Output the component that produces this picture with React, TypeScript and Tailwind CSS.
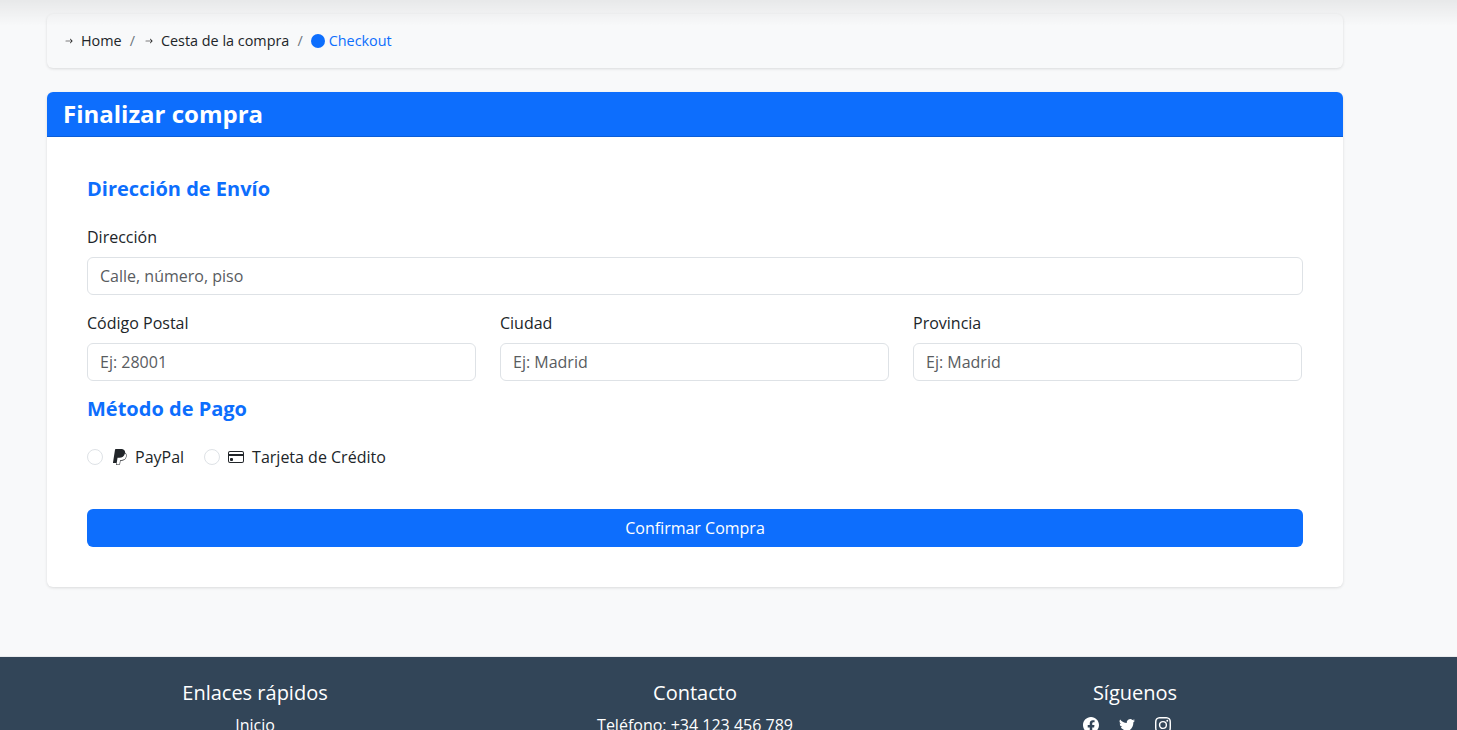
import React from 'react';
import { BsArrowRight, BsCreditCard, BsFacebook, BsInstagram, BsPaypal, BsTwitter } from 'react-icons/bs';

const App: React.FC = () => {
  return (
    <div className="relative h-[730px] overflow-hidden bg-[#f8f9fa] text-[#212529] font-['Open_Sans',sans-serif] flex flex-col">
      {/* header shadow falling over the page */}
      <div className="absolute top-0 left-0 right-0 h-[26px] z-10 pointer-events-none bg-gradient-to-b from-[rgba(0,0,0,0.065)] to-transparent" />
      <div className="w-[1296px] ml-[47px] flex-1 pt-[14px]">
        <div className="h-[54px] bg-[#f8f9fa] rounded-md shadow-[0_1px_3px_rgba(0,0,0,0.12)] px-4 pb-[1px] flex items-center text-[14.4px]">
          <BsArrowRight className="w-2 h-2 ml-[2px] mr-[8px] text-black" />
          <span>Home</span>
          <span className="ml-2 mr-[8px] text-[#6c757d]">/</span>
          <BsArrowRight className="w-2 h-2 ml-[2px] mr-[8px] text-black" />
          <span>Cesta de la compra</span>
          <span className="ml-2 mr-[8px] text-[#6c757d]">/</span>
          <span className="w-[14px] h-[14px] rounded-full bg-[#0d6efd] mr-[4px]" />
          <span className="text-[#0d6efd]">Checkout</span>
        </div>

        <div className="mt-6 bg-white rounded-md shadow-[0_1px_3px_rgba(0,0,0,0.12)] h-[495px]">
          <div className="h-[45px] bg-[#0d6efd] border-b border-[#0b5ed7] rounded-t-md px-4 pb-[1px] flex items-center">
            <h1 className="text-[24px] font-bold text-white">Finalizar compra</h1>
          </div>
          <div className="px-10 pt-[36px]">
            <h2 className="text-[20px] leading-[32px] font-bold text-[#0d6efd]">Dirección de Envío</h2>
            <label className="block mt-[20px] text-[16px] leading-[24px]">Dirección</label>
            <input
              placeholder="Calle, número, piso"
              className="mt-2 block w-full h-[38px] px-3 border border-[#dee2e6] rounded-md text-[16px] placeholder:text-[#595c5f]"
            />
            <div className="grid grid-cols-[389px_389px_389px] gap-6 mt-4">
              {[
                ['Código Postal', 'Ej: 28001'],
                ['Ciudad', 'Ej: Madrid'],
                ['Provincia', 'Ej: Madrid'],
              ].map(([label, ph]) => (
                <div key={label}>
                  <label className="block text-[16px] leading-[24px]">{label}</label>
                  <input
                    placeholder={ph}
                    className="mt-2 block w-full h-[38px] px-3 border border-[#dee2e6] rounded-md text-[16px] placeholder:text-[#595c5f]"
                  />
                </div>
              ))}
            </div>
            <h2 className="mt-3 text-[20px] leading-[32px] font-bold text-[#0d6efd]">Método de Pago</h2>
            <div className="mt-[20px] flex items-center text-[16px] leading-[24px]">
              <span className="w-4 h-4 rounded-full border border-[#dee2e6] bg-white" />
              <BsPaypal className="w-4 h-4 ml-2 text-[#212529]" />
              <span className="ml-2">PayPal</span>
              <span className="w-4 h-4 rounded-full border border-[#dee2e6] bg-white ml-5" />
              <BsCreditCard className="w-4 h-4 ml-2 text-[#212529]" />
              <span className="ml-2">Tarjeta de Crédito</span>
            </div>
            <button className="mt-10 w-full h-[38px] bg-[#0d6efd] text-white rounded-md text-[16px]">Confirmar Compra</button>
          </div>
        </div>
      </div>

      <footer className="h-[73px] shrink-0 bg-[#324558] text-white shadow-[0_-1px_0_#e9ebed]">
        <div className="w-[1320px] ml-[35px] grid grid-cols-3 text-center pt-[22px]">
          <div>
            <h5 className="text-[20px] leading-[28px]">Enlaces rápidos</h5>
            <p className="mt-[6px] text-[16px] leading-[24px]">Inicio</p>
          </div>
          <div>
            <h5 className="text-[20px] leading-[28px]">Contacto</h5>
            <p className="mt-[6px] text-[16px] leading-[24px]">Teléfono: +34 123 456 789</p>
          </div>
          <div>
            <h5 className="text-[20px] leading-[28px]">Síguenos</h5>
            <div className="mt-[10px] flex justify-center gap-5 pr-4">
              <BsFacebook className="w-4 h-4" />
              <BsTwitter className="w-4 h-4" />
              <BsInstagram className="w-4 h-4" />
            </div>
          </div>
        </div>
      </footer>
    </div>
  );
};

export default App;
